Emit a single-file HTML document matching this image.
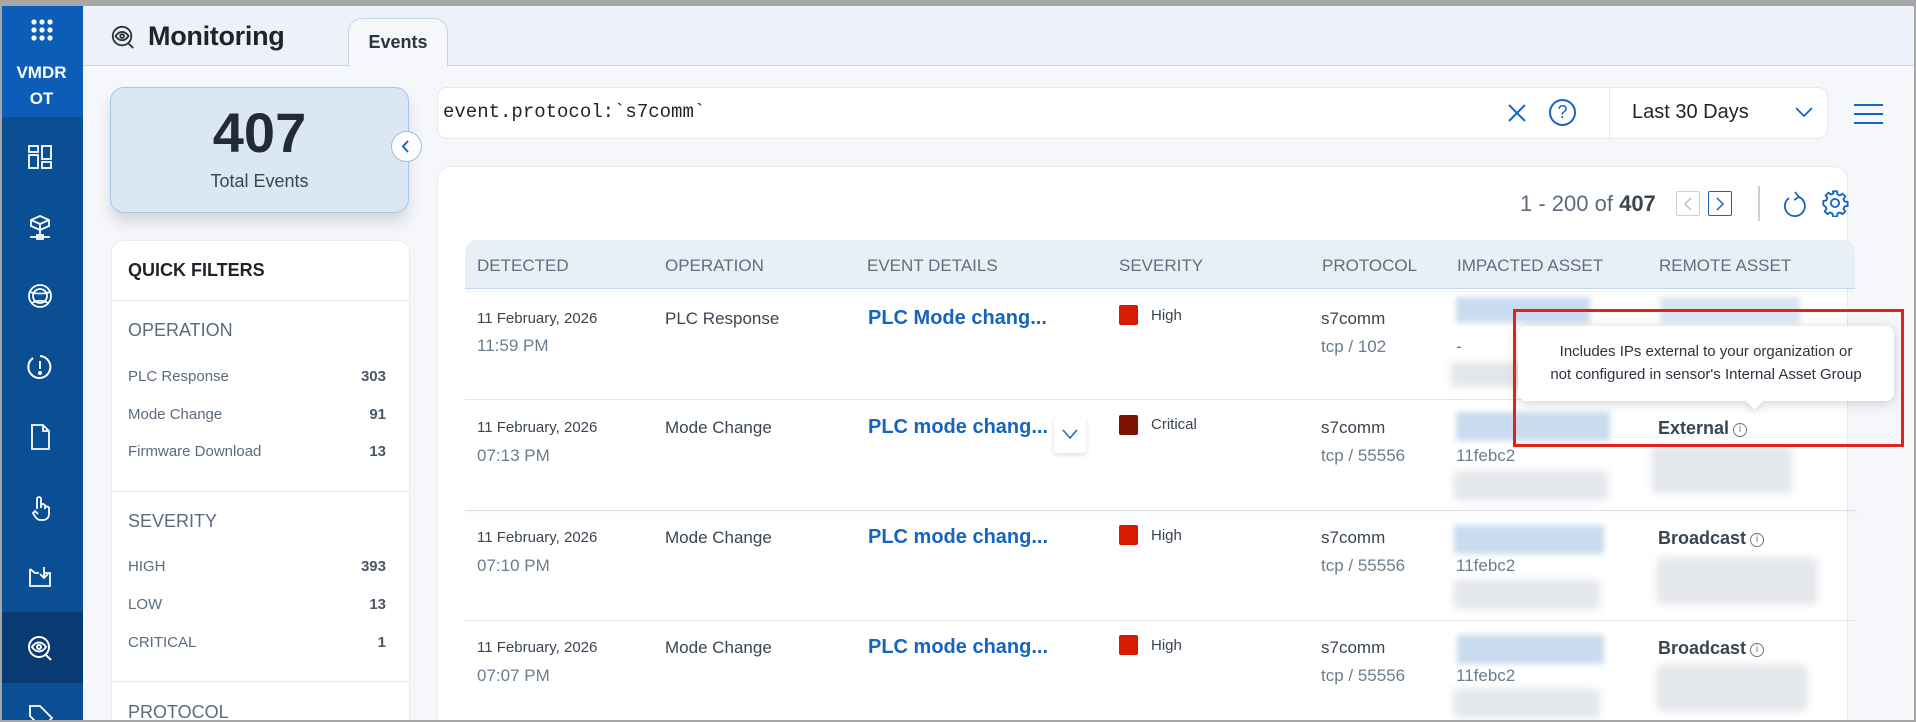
<!DOCTYPE html>
<html><head><meta charset="utf-8"><style>
*{box-sizing:border-box;margin:0;padding:0}
html,body{width:1916px;height:722px;overflow:hidden}
body{background:#f5f7fa;font-family:"Liberation Sans",sans-serif;position:relative;color:#2b3440}
.a{position:absolute}
.frame{position:absolute;left:0;top:0;width:1916px;height:722px;border:2px solid #a6a6a6;border-top-width:6px;pointer-events:none;z-index:50}
.side{left:0;top:0;width:83px;height:722px;background:#0a4f94}
.logo{left:0;top:0;width:83px;height:117px;background:#0b5db8}
.ico{position:absolute;left:26px;width:28px;height:28px}
.hdr{left:83px;top:6px;width:1833px;height:60px;background:#edf2f9;border-bottom:1px solid #c5d6ea}
.fl{font-size:15px;color:#5a6b7d}
.fn{font-size:15px;font-weight:bold;color:#4a5866;text-align:right;width:60px}
.sec{font-size:18px;color:#5a6b7d}
.th{font-size:17px;color:#5f6f80;top:256px}
.d1{font-size:15px;color:#3a4550}
.d2{font-size:17px;color:#6b7d8f}
.op{font-size:17px;color:#3a4550}
.ev{font-size:20px;font-weight:bold;color:#1565c0}
.sq{width:19px;height:20px;border-radius:2px;background:#d71a00}
.sv{font-size:15px;color:#3a4550}
.pr{font-size:17px;color:#3a4550}
.tc{font-size:17px;color:#6b7d8f}
.bb{background:#c9dbef;filter:blur(3px)}
.bg{background:#e3e6ea;filter:blur(4px)}
.ra{font-size:18px;font-weight:bold;color:#3a4550}
.inf{display:inline-block;width:14px;height:14px;border:1.3px solid #6b7785;border-radius:50%;font-size:10px;text-align:center;line-height:12px;color:#6b7785;font-weight:normal;vertical-align:2px;margin-left:4px}
</style></head><body>
<div class="a side"></div>
<div class="a logo"></div>
<svg class="a" style="left:30px;top:18px" width="24" height="24" viewBox="0 0 24 24" fill="#fff"><circle cx="4" cy="4" r="2.6"/><circle cx="12" cy="4" r="2.6"/><circle cx="20" cy="4" r="2.6"/><circle cx="4" cy="12" r="2.6"/><circle cx="12" cy="12" r="2.6"/><circle cx="20" cy="12" r="2.6"/><circle cx="4" cy="20" r="2.6"/><circle cx="12" cy="20" r="2.6"/><circle cx="20" cy="20" r="2.6"/></svg>
<div class="a" style="left:0;top:60px;width:83px;text-align:center;color:#fff;font-weight:bold;font-size:17px;line-height:26px">VMDR<br>OT</div>
<div class="a" style="left:0;top:612px;width:83px;height:71px;background:#083b72"></div>
<svg class="ico" style="top:143px" viewBox="0 0 28 28" fill="none" stroke="#fff" stroke-width="1.8"><rect x="3" y="3" width="9" height="6"/><rect x="3" y="12" width="9" height="13"/><rect x="16" y="3" width="9" height="13"/><rect x="16" y="19" width="9" height="6"/></svg>
<svg class="ico" style="top:213px" viewBox="0 0 28 28" fill="none" stroke="#fff" stroke-width="1.8"><path d="M14 3l9 4v6l-9 4-9-4V7z M5 7l9 4 9-4 M14 11v6 M14 17v5 M4 24h20 M11 22h6v4h-6z"/></svg>
<svg class="ico" style="top:282px" viewBox="0 0 28 28" fill="none" stroke="#fff" stroke-width="1.8"><circle cx="14" cy="14" r="11"/><circle cx="14" cy="14" r="7"/><path d="M4 10c6 2 14 2 20 0 M6 21c5-3 11-3 16 0"/></svg>
<svg class="ico" style="top:353px" viewBox="0 0 28 28" fill="none" stroke="#fff" stroke-width="2"><path d="M7 5A11 11 0 1 0 14 3"/><path d="M14 8v8"/><circle cx="14" cy="20" r="1" fill="#fff"/></svg>
<svg class="ico" style="top:423px" viewBox="0 0 28 28" fill="none" stroke="#fff" stroke-width="1.8"><path d="M6 2h11l6 6v18H6z M17 2v6h6"/></svg>
<svg class="ico" style="top:494px" viewBox="0 0 28 28" fill="none" stroke="#fff" stroke-width="1.8"><path d="M11 15V5a2 2 0 0 1 4 0v9 M15 12a2 2 0 0 1 4 0v3 M19 14a2 2 0 0 1 4 1v5c0 4-3 6-6 6h-3c-3 0-5-3-7-7l2-2 3 3"/></svg>
<svg class="ico" style="top:563px" viewBox="0 0 28 28" fill="none" stroke="#fff" stroke-width="1.8"><path d="M4 6v17h20V10h-6 M4 6l5 4h4 M18 4v11 M14 11l4 4 4-4"/></svg>
<svg class="ico" style="top:634px" viewBox="0 0 28 28" fill="none" stroke="#fff" stroke-width="2"><circle cx="13" cy="13" r="10"/><path d="M6 13c4-6 10-6 14 0-4 6-10 6-14 0z"/><circle cx="13" cy="13" r="2"/><path d="M20 21l5 5"/></svg>
<svg class="ico" style="top:702px" viewBox="0 0 28 28" fill="none" stroke="#fff" stroke-width="1.8"><path d="M4 4h10l12 12-10 10L4 14z"/></svg>

<div class="a hdr"></div>
<svg class="a" style="left:110px;top:24px" width="26" height="26" viewBox="0 0 28 28" fill="none" stroke="#2b3440" stroke-width="2"><circle cx="13" cy="13" r="10"/><path d="M6 13c4-6 10-6 14 0-4 6-10 6-14 0z"/><circle cx="13" cy="13" r="2"/><path d="M20 21l5 5"/></svg>
<div class="a" style="left:148px;top:21px;font-size:27px;font-weight:bold;color:#1d242c;letter-spacing:-0.3px">Monitoring</div>
<div class="a" style="left:348px;top:18px;width:100px;height:49px;background:#f5f7fa;border:1px solid #c5d6ea;border-bottom:none;border-radius:14px 14px 0 0;text-align:center;font-size:18px;font-weight:bold;color:#2b3440;line-height:46px">Events</div>

<div class="a" style="left:110px;top:87px;width:299px;height:126px;background:#dce7f4;border:1px solid #a9c5e6;border-radius:14px;box-shadow:0 10px 14px rgba(0,0,0,0.12);text-align:center">
<div style="font-size:56px;font-weight:bold;color:#222a33;margin-top:17px;line-height:56px">407</div>
<div style="font-size:18px;color:#3a4550;margin-top:10px">Total Events</div></div>
<div class="a" style="left:391px;top:131px;width:31px;height:31px;border-radius:50%;background:#fff;border:1px solid #9dbbe0"></div>
<svg class="a" style="left:399px;top:139px" width="14" height="15" viewBox="0 0 14 15"><path d="M9 2L4 7.5 9 13" fill="none" stroke="#1565c0" stroke-width="2"/></svg>

<div class="a" style="left:111px;top:240px;width:299px;height:482px;background:#fff;border:1px solid #e8ecf1;border-bottom:none;border-radius:12px 12px 0 0"></div>
<div class="a" style="left:128px;top:260px;font-size:18px;font-weight:bold;color:#1d242c">QUICK FILTERS</div>
<div class="a" style="left:112px;top:300px;width:297px;height:1px;background:#e6eaef"></div>
<div class="a sec" style="left:128px;top:320px">OPERATION</div>
<div class="a fl" style="left:128px;top:368px">PLC Response</div><div class="a fn" style="left:326px;top:368px">303</div>
<div class="a fl" style="left:128px;top:406px">Mode Change</div><div class="a fn" style="left:326px;top:406px">91</div>
<div class="a fl" style="left:128px;top:443px">Firmware Download</div><div class="a fn" style="left:326px;top:443px">13</div>
<div class="a" style="left:112px;top:491px;width:297px;height:1px;background:#e6eaef"></div>
<div class="a sec" style="left:128px;top:511px">SEVERITY</div>
<div class="a fl" style="left:128px;top:558px">HIGH</div><div class="a fn" style="left:326px;top:558px">393</div>
<div class="a fl" style="left:128px;top:596px">LOW</div><div class="a fn" style="left:326px;top:596px">13</div>
<div class="a fl" style="left:128px;top:634px">CRITICAL</div><div class="a fn" style="left:326px;top:634px">1</div>
<div class="a" style="left:112px;top:681px;width:297px;height:1px;background:#e6eaef"></div>
<div class="a sec" style="left:128px;top:702px">PROTOCOL</div>

<div class="a" style="left:437px;top:87px;width:1391px;height:52px;background:#fff;border:1px solid #e3e8ee;border-radius:10px"></div>
<div class="a" style="left:443px;top:101px;font-family:'Liberation Mono',monospace;font-size:19px;color:#1d242c">event.protocol:`s7comm`</div>
<svg class="a" style="left:1507px;top:103px" width="20" height="20" viewBox="0 0 20 20"><path d="M2 2l16 16M18 2L2 18" stroke="#1565c0" stroke-width="2"/></svg>
<div class="a" style="left:1549px;top:99px;width:27px;height:27px;border:2px solid #1565c0;border-radius:50%;text-align:center;font-size:18px;line-height:23px;color:#1565c0">?</div>
<div class="a" style="left:1609px;top:88px;width:1px;height:50px;background:#e3e8ee"></div>
<div class="a" style="left:1632px;top:101px;font-size:20px;color:#1d242c">Last 30 Days</div>
<svg class="a" style="left:1795px;top:106px" width="18" height="12" viewBox="0 0 18 12"><path d="M1 2l8 8 8-8" fill="none" stroke="#1565c0" stroke-width="1.8"/></svg>
<svg class="a" style="left:1854px;top:103px" width="29" height="22" viewBox="0 0 29 22"><path d="M0 2h29M0 11h29M0 20h29" stroke="#1565c0" stroke-width="2"/></svg>

<div class="a" style="left:437px;top:166px;width:1411px;height:556px;background:#fff;border:1px solid #e6eaef;border-bottom:none;border-radius:14px 14px 0 0"></div>
<div class="a" style="left:1520px;top:191px;font-size:22px;color:#5a6b7d">1 - 200 of <b style="color:#3a4550">407</b></div>
<div class="a" style="left:1676px;top:191px;width:24px;height:25px;border:1.5px solid #c8d0d8;border-radius:2px"></div>
<svg class="a" style="left:1683px;top:197px" width="10" height="14" viewBox="0 0 10 14"><path d="M8 1L2 7l6 6" fill="none" stroke="#b8c0c8" stroke-width="1.5"/></svg>
<div class="a" style="left:1708px;top:191px;width:24px;height:25px;border:1.5px solid #1565c0;border-radius:2px"></div>
<svg class="a" style="left:1715px;top:197px" width="10" height="14" viewBox="0 0 10 14"><path d="M2 1l6 6-6 6" fill="none" stroke="#1565c0" stroke-width="1.5"/></svg>
<div class="a" style="left:1758px;top:186px;width:2px;height:35px;background:#c8d0d8"></div>
<svg class="a" style="left:1782px;top:189px" width="26" height="30" viewBox="0 0 26 30" fill="none" stroke="#1565c0" stroke-width="1.8"><path d="M17 8A10 10 0 1 1 7 9"/><path d="M13 3l4 5-5 3"/></svg>
<svg class="a" style="left:1821px;top:189px" width="28" height="28" viewBox="0 0 24 24" fill="none" stroke="#1565c0" stroke-width="1.6"><circle cx="12" cy="12" r="3.5"/><path d="M10.3 2h3.4l.5 2.6 2 .9 2.2-1.5 2.4 2.4-1.5 2.2.9 2 2.6.5v3.4l-2.6.5-.9 2 1.5 2.2-2.4 2.4-2.2-1.5-2 .9-.5 2.6h-3.4l-.5-2.6-2-.9-2.2 1.5-2.4-2.4 1.5-2.2-.9-2L2 13.7v-3.4l2.6-.5.9-2L4 5.6l2.4-2.4 2.2 1.5 2-.9z"/></svg>

<div class="a" style="left:465px;top:240px;width:1390px;height:49px;background:#e9eff7;border-bottom:1px solid #c5d8ee;border-radius:12px 12px 0 0"></div>
<div class="a th" style="left:477px">DETECTED</div>
<div class="a th" style="left:665px">OPERATION</div>
<div class="a th" style="left:867px">EVENT DETAILS</div>
<div class="a th" style="left:1119px">SEVERITY</div>
<div class="a th" style="left:1322px">PROTOCOL</div>
<div class="a th" style="left:1457px">IMPACTED ASSET</div>
<div class="a th" style="left:1659px">REMOTE ASSET</div>
<div class="a" style="left:465px;top:291px;width:1390px;height:1px;background:#eef1f4"></div>
<div class="a" style="left:465px;top:399px;width:1390px;height:1px;background:#e3e7ec"></div>
<div class="a" style="left:465px;top:510px;width:1390px;height:1px;background:#d6dee8;box-shadow:0 4px 8px rgba(160,180,210,0.3)"></div>
<div class="a" style="left:465px;top:620px;width:1390px;height:1px;background:#e3e7ec"></div>

<div class="a d1" style="left:477px;top:310px">11 February, 2026</div>
<div class="a d2" style="left:477px;top:336px">11:59 PM</div>
<div class="a op" style="left:665px;top:309px">PLC Response</div>
<div class="a ev" style="left:868px;top:307px">PLC Mode chang...</div>
<div class="a sq" style="left:1119px;top:305px"></div><div class="a sv" style="left:1151px;top:307px">High</div>
<div class="a pr" style="left:1321px;top:309px">s7comm</div><div class="a tc" style="left:1321px;top:337px">tcp / 102</div>
<div class="a bb" style="left:1456px;top:297px;width:134px;height:26px"></div>
<div class="a tc" style="left:1456px;top:337px">-</div>
<div class="a bg" style="left:1451px;top:362px;width:80px;height:25px"></div>
<div class="a bb" style="left:1660px;top:297px;width:140px;height:26px;opacity:.7"></div>

<div class="a d1" style="left:477px;top:419px">11 February, 2026</div>
<div class="a d2" style="left:477px;top:446px">07:13 PM</div>
<div class="a op" style="left:665px;top:418px">Mode Change</div>
<div class="a ev" style="left:868px;top:416px">PLC mode chang...</div>
<div class="a" style="left:1054px;top:417px;width:32px;height:36px;background:#fff;border-radius:4px;box-shadow:0 2px 6px rgba(0,0,0,0.12)"></div>
<svg class="a" style="left:1062px;top:428px" width="16" height="12" viewBox="0 0 16 12"><path d="M1 2l7 8 7-8" fill="none" stroke="#1565c0" stroke-width="1.5"/></svg>
<div class="a sq" style="left:1119px;top:415px;background:#7d1000"></div><div class="a sv" style="left:1151px;top:416px">Critical</div>
<div class="a pr" style="left:1321px;top:418px">s7comm</div><div class="a tc" style="left:1321px;top:446px">tcp / 55556</div>
<div class="a bb" style="left:1456px;top:412px;width:154px;height:29px"></div>
<div class="a tc" style="left:1456px;top:446px">11febc2</div>
<div class="a bg" style="left:1454px;top:471px;width:154px;height:29px"></div>
<div class="a bg" style="left:1652px;top:447px;width:140px;height:46px"></div>

<div class="a d1" style="left:477px;top:529px">11 February, 2026</div>
<div class="a d2" style="left:477px;top:556px">07:10 PM</div>
<div class="a op" style="left:665px;top:528px">Mode Change</div>
<div class="a ev" style="left:868px;top:526px">PLC mode chang...</div>
<div class="a sq" style="left:1119px;top:525px"></div><div class="a sv" style="left:1151px;top:527px">High</div>
<div class="a pr" style="left:1321px;top:528px">s7comm</div><div class="a tc" style="left:1321px;top:556px">tcp / 55556</div>
<div class="a bb" style="left:1454px;top:525px;width:150px;height:29px"></div>
<div class="a tc" style="left:1456px;top:556px">11febc2</div>
<div class="a bg" style="left:1454px;top:580px;width:146px;height:29px"></div>
<div class="a ra" style="left:1658px;top:528px">Broadcast<span class="inf">i</span></div>
<div class="a bg" style="left:1657px;top:558px;width:160px;height:46px"></div>

<div class="a d1" style="left:477px;top:639px">11 February, 2026</div>
<div class="a d2" style="left:477px;top:666px">07:07 PM</div>
<div class="a op" style="left:665px;top:638px">Mode Change</div>
<div class="a ev" style="left:868px;top:636px">PLC mode chang...</div>
<div class="a sq" style="left:1119px;top:635px"></div><div class="a sv" style="left:1151px;top:637px">High</div>
<div class="a pr" style="left:1321px;top:638px">s7comm</div><div class="a tc" style="left:1321px;top:666px">tcp / 55556</div>
<div class="a bb" style="left:1457px;top:635px;width:147px;height:29px"></div>
<div class="a tc" style="left:1456px;top:666px">11febc2</div>
<div class="a bg" style="left:1454px;top:689px;width:146px;height:29px"></div>
<div class="a ra" style="left:1658px;top:638px">Broadcast<span class="inf">i</span></div>
<div class="a bg" style="left:1657px;top:665px;width:150px;height:46px"></div>

<div class="a ra" style="left:1658px;top:418px">External<span class="inf">i</span></div>
<div class="a" style="left:1518px;top:326px;width:376px;height:75px;background:#fff;border-radius:8px;box-shadow:0 2px 12px rgba(0,0,0,0.18);text-align:center;font-size:15px;color:#2b3440;line-height:23px;padding-top:14px">Includes IPs external to your organization or<br>not configured in sensor's Internal Asset Group</div>
<div class="a" style="left:1748px;top:394px;width:13px;height:13px;background:#fff;transform:rotate(45deg);box-shadow:3px 3px 5px rgba(0,0,0,0.08)"></div>
<div class="a" style="left:1513px;top:309px;width:391px;height:138px;border:3px solid #e2231a"></div>
<div class="frame"></div>
</body></html>
